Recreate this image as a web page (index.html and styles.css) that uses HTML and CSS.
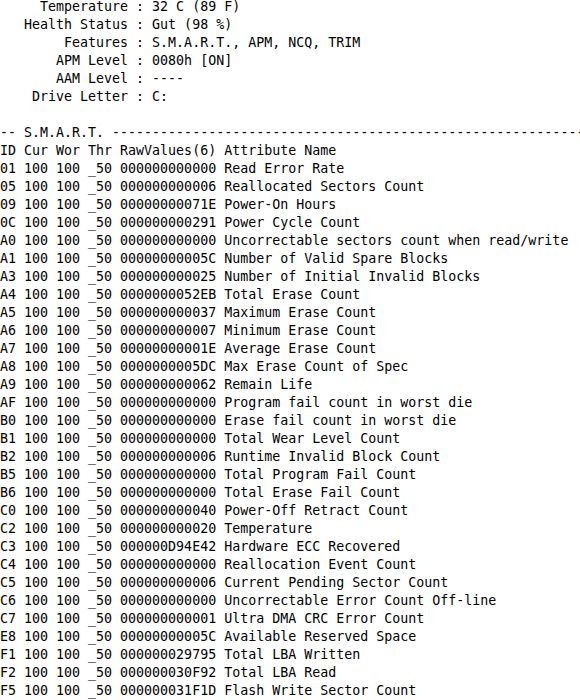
FILE: index.html
```html
<!DOCTYPE html>
<html>
<head>
<meta charset="utf-8">
<link rel="stylesheet" href="styles.css">
</head>
<body>
<pre class="dump">     Temperature : 32 C (89 F)
   Health Status : Gut (98 %)
        Features : S.M.A.R.T., APM, NCQ, TRIM
       APM Level : 0080h [ON]
       AAM Level : ----
    Drive Letter : C:

-- S.M.A.R.T. --------------------------------------------------------------------------------
ID Cur Wor Thr RawValues(6) Attribute Name
01 100 100 _50 000000000000 Read Error Rate
05 100 100 _50 000000000006 Reallocated Sectors Count
09 100 100 _50 00000000071E Power-On Hours
0C 100 100 _50 000000000291 Power Cycle Count
A0 100 100 _50 000000000000 Uncorrectable sectors count when read/write
A1 100 100 _50 00000000005C Number of Valid Spare Blocks
A3 100 100 _50 000000000025 Number of Initial Invalid Blocks
A4 100 100 _50 0000000052EB Total Erase Count
A5 100 100 _50 000000000037 Maximum Erase Count
A6 100 100 _50 000000000007 Minimum Erase Count
A7 100 100 _50 00000000001E Average Erase Count
A8 100 100 _50 0000000005DC Max Erase Count of Spec
A9 100 100 _50 000000000062 Remain Life
AF 100 100 _50 000000000000 Program fail count in worst die
B0 100 100 _50 000000000000 Erase fail count in worst die
B1 100 100 _50 000000000000 Total Wear Level Count
B2 100 100 _50 000000000006 Runtime Invalid Block Count
B5 100 100 _50 000000000000 Total Program Fail Count
B6 100 100 _50 000000000000 Total Erase Fail Count
C0 100 100 _50 000000000040 Power-Off Retract Count
C2 100 100 _50 000000000020 Temperature
C3 100 100 _50 000000D94E42 Hardware ECC Recovered
C4 100 100 _50 000000000000 Reallocation Event Count
C5 100 100 _50 000000000006 Current Pending Sector Count
C6 100 100 _50 000000000000 Uncorrectable Error Count Off-line
C7 100 100 _50 000000000001 Ultra DMA CRC Error Count
E8 100 100 _50 00000000005C Available Reserved Space
F1 100 100 _50 000000029795 Total LBA Written
F2 100 100 _50 000000030F92 Total LBA Read
F5 100 100 _50 000000031F1D Flash Write Sector Count</pre>
</body>
</html>
```
FILE: styles.css
```css
html, body {
  margin: 0;
  padding: 0;
  background: #ffffff;
  overflow: hidden;
}
.dump {
  margin: -2px 0 0 0;
  padding: 0;
  font-family: "DejaVu Sans Mono", "Liberation Mono", monospace;
  font-size: 13.3px;
  line-height: 18px;
  color: #000000;
  white-space: pre;
  overflow: hidden;
}
```
